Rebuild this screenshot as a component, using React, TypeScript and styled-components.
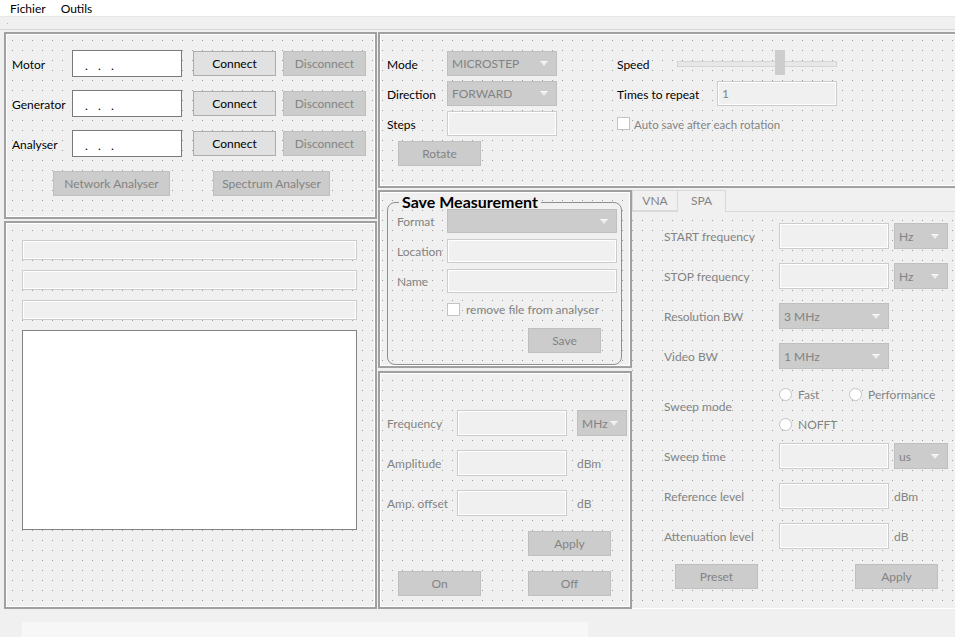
import React from 'react';
import styled, { createGlobalStyle, css } from 'styled-components';

const Global = createGlobalStyle`
  html, body { margin: 0; padding: 0; background: #f0f0f0; overflow: hidden; }
  body { font-family: Lato, "Liberation Sans", sans-serif; font-size: 12px; color: #000; }
  #root { width: 955px; height: 637px; overflow: hidden; }
  * { box-sizing: border-box; }
`;

const MUTED = '#838383';

const dots = css`
  background-color: #f0f0f0;
  background-image: linear-gradient(to bottom, transparent 1px, #f0f0f0 1px),
    linear-gradient(to right, #9e9e9e 1px, transparent 1px);
  background-size: 10px 10px;
  background-position: 2px 0;
  background-attachment: fixed;
`;

const Window = styled.div`
  width: 955px;
  height: 637px;
  display: flex;
  flex-direction: column;
  background: #f0f0f0;
  overflow: hidden;
`;

const MenuBar = styled.div`
  height: 17px;
  flex: none;
  background: #fff;
  border-bottom: 1px solid #e8e8e8;
  display: flex;
  align-items: center;
  gap: 15px;
  padding-left: 10px;
  font-size: 12px;
`;

const ToolBar = styled.div`
  height: 13px;
  flex: none;
  border-bottom: 1px solid #d7d7d7;
  display: flex;
  align-items: center;
  padding-left: 7px;
`;

const Grip = styled.span`
  width: 1px;
  height: 1px;
  background: #b8b8b8;
`;

const Main = styled.div`
  height: 579px;
  flex: none;
  display: flex;
  gap: 1px;
  padding: 2px 0 0 4px;
`;

const StatusBar = styled.div`
  flex: 1;
  padding: 13px 0 0 22px;
`;

const StatusStrip = styled.div`
  width: 566px;
  height: 15px;
  background: #f7f7f7;
`;

const Column = styled.div<{ $w: number; $gap: number }>`
  width: ${p => p.$w}px;
  flex: none;
  display: flex;
  flex-direction: column;
  gap: ${p => p.$gap}px;
`;

const Frame = styled.div<{ $h: number }>`
  ${dots};
  height: ${p => p.$h}px;
  flex: none;
  border: 2px solid #a0a0a0;
  box-shadow: inset 0 0 0 1px #ffffff;
`;

const Label = styled.span<{ $muted?: boolean; $size?: number }>`
  color: ${p => (p.$muted ? MUTED : '#000')};
  font-size: ${p => p.$size ?? 12}px;
  white-space: nowrap;
  padding-top: 1px;
`;

const Button = styled.button<{ $w?: number }>`
  width: ${p => p.$w ?? 83}px;
  height: 25px;
  padding: 0;
  font-family: inherit;
  font-size: 12px;
  color: #000;
  background: #e1e1e1;
  border: 1px solid #adadad;
  &:disabled {
    color: ${MUTED};
    background: #cccccc;
    border-color: #bfbfbf;
  }
`;

const Field = styled.div<{ $w: number; $h?: number; $enabled?: boolean }>`
  width: ${p => p.$w}px;
  height: ${p => p.$h ?? 26}px;
  display: flex;
  align-items: center;
  padding-left: 4px;
  color: ${p => (p.$enabled ? '#000' : MUTED)};
  background: ${p => (p.$enabled ? '#ffffff' : '#f0f0f0')};
  border: 1px solid ${p => (p.$enabled ? '#7a7a7a' : '#cccccc')};
  box-shadow: ${p => (p.$enabled ? 'none' : 'inset 0 0 0 1px #ffffff')};
`;

const IpDot = styled.span`
  width: 13px;
  flex: none;
  padding-top: 3px;
`;

const IpField = styled(Field)`
  padding-left: 12px;
`;

const ComboBox = styled.div<{ $w: number; $h?: number }>`
  width: ${p => p.$w}px;
  height: ${p => p.$h ?? 26}px;
  display: flex;
  align-items: center;
  justify-content: space-between;
  padding: 0 8px 0 4px;
  color: ${MUTED};
  background: #cccccc;
  border: 1px solid #bfbfbf;
`;

const Arrow = () => (
  <svg width="8" height="5" viewBox="0 0 8 5">
    <polygon points="0,0 8,0 4,5" fill="#ededed" />
    <polygon points="0,0 8,0 7,1 1,1" fill="#f8f8f8" />
  </svg>
);

const Combo = ({ w, h, text }: { w: number; h?: number; text?: string }) => (
  <ComboBox $w={w} $h={h}>
    <span>{text}</span>
    <Arrow />
  </ComboBox>
);

const CheckBox = styled.span`
  width: 13px;
  height: 13px;
  flex: none;
  background: #ffffff;
  border: 1px solid #c4c4c4;
`;

const Radio = styled.span`
  width: 13px;
  height: 13px;
  flex: none;
  border-radius: 50%;
  background: #ffffff;
  border: 1px solid #c4c4c4;
`;

const CheckRow = styled.div<{ $gap: number }>`
  display: flex;
  align-items: center;
  gap: ${p => p.$gap}px;
`;

/* ---------- Left top frame ---------- */
const ConnGrid = styled.div`
  display: grid;
  grid-template-columns: 60px 121px 90px 83px;
  grid-auto-rows: 27px;
  row-gap: 13px;
  align-items: center;
  padding: 16px 0 0 6px;
`;

const AnalyserRow = styled.div`
  display: flex;
  gap: 43px;
  padding: 14px 0 0 47px;
`;

/* ---------- Left bottom frame ---------- */
const LogBody = styled.div`
  display: flex;
  flex-direction: column;
  gap: 10px;
  padding: 17px 0 0 16px;
`;

const StatusLine = styled.div`
  width: 335px;
  height: 20px;
  background: #f0f0f0;
  border: 1px solid #cccccc;
  box-shadow: inset 0 0 0 1px #ffffff;
`;

const LogArea = styled.div`
  width: 335px;
  height: 200px;
  background: #ffffff;
  border: 1px solid #828282;
`;

/* ---------- Motor frame ---------- */
const MotorBody = styled.div`
  display: flex;
  padding: 17px 0 0 7px;
`;

const MotorGrid = styled.div`
  display: grid;
  grid-template-columns: 60px 110px;
  grid-template-rows: repeat(4, 25px);
  row-gap: 5px;
  align-items: center;
`;

const RotateCell = styled.div`
  grid-column: 1 / span 2;
  padding-left: 11px;
`;

const MotorRight = styled.div`
  display: flex;
  flex-direction: column;
  gap: 5px;
  margin-left: 60px;
`;

const MotorRow = styled.div<{ $label: number }>`
  height: 25px;
  display: flex;
  align-items: center;
  & > ${Label} {
    width: ${p => p.$label}px;
    flex: none;
  }
`;

const Slider = styled.div`
  position: relative;
  width: 160px;
  height: 25px;
  &::before {
    content: '';
    position: absolute;
    left: 0;
    right: 0;
    top: 10px;
    height: 4px;
    background: #e7e7e7;
    border: 1px solid #d6d6d6;
  }
`;

const SliderHandle = styled.span<{ $left: number }>`
  position: absolute;
  top: -1px;
  left: ${p => p.$left}px;
  width: 10px;
  height: 25px;
  background: #cdcdcd;
`;

/* ---------- Save measurement ---------- */
const SaveGroup = styled.fieldset`
  margin: 4px 8px 0 7px;
  padding: 1px 0 0 9px;
  min-width: 0;
  height: 169px;
  border: 1px solid #8f8f8f;
  border-radius: 8px;
`;

const Legend = styled.legend`
  margin-left: 2px;
  padding: 0 3px;
  font-size: 16px;
  font-weight: 700;
  line-height: 12px;
  color: #000;
`;

const SaveGrid = styled.div`
  display: grid;
  grid-template-columns: 50px 170px;
  grid-template-rows: 24px 24px 24px 20px 28px;
  row-gap: 6px;
  align-items: center;
`;

const SaveCell = styled.div`
  grid-column: 2;
  align-self: end;
  padding-left: 81px;
`;

/* ---------- Generator frame ---------- */
const GenGrid = styled.div`
  display: grid;
  grid-template-columns: 70px 120px 50px;
  grid-auto-rows: 26px;
  row-gap: 14px;
  align-items: center;
  padding: 37px 0 0 7px;
`;

const GenButtons = styled.div`
  display: grid;
  grid-template-columns: 83px 83px;
  grid-template-rows: 25px 25px;
  column-gap: 47px;
  row-gap: 15px;
  padding: 15px 0 0 18px;
`;

const SecondCol = styled.div`
  grid-column: 2;
`;

/* ---------- Tabs ---------- */
const RightArea = styled.div`
  width: 582px;
  flex: none;
  display: flex;
  flex-direction: column;
  gap: 2px;
`;

const LowerRow = styled.div`
  display: flex;
  flex: 1;
  min-height: 0;
`;

const TabWidget = styled.div`
  flex: 1;
  display: flex;
  flex-direction: column;
`;

const TabBar = styled.div`
  height: 21px;
  flex: none;
  display: flex;
  align-items: flex-end;
`;

const Tab = styled.div<{ $w: number; $active?: boolean }>`
  width: ${p => p.$w}px;
  height: ${p => (p.$active ? 22 : 21)}px;
  margin-bottom: ${p => (p.$active ? -1 : 0)}px;
  position: relative;
  z-index: ${p => (p.$active ? 1 : 0)};
  display: flex;
  align-items: center;
  justify-content: center;
  padding-bottom: ${p => (p.$active ? 2 : 1)}px;
  color: ${MUTED};
  background: #f0f0f0;
  border: 1px solid #d9d9d9;
  border-bottom: ${p => (p.$active ? 'none' : '1px solid #d9d9d9')};
  border-left: ${p => (p.$active ? 'none' : '1px solid #d9d9d9')};
`;

const Pane = styled.div`
  ${dots};
  flex: 1;
  border-top: 1px solid #d9d9d9;
  border-bottom: 1px solid #ffffff;
  padding: 11px 0 0 32px;
`;

const SpaGrid = styled.div`
  display: grid;
  grid-template-columns: 115px 115px 54px;
  grid-template-rows: 26px 26px 26px 26px 46px 26px 26px 26px;
  row-gap: 14px;
  align-items: center;
`;

const RadioGroup = styled.div`
  grid-column: 2 / span 2;
  align-self: start;
  display: grid;
  grid-template-columns: 70px auto;
  grid-auto-rows: 22px;
  row-gap: 8px;
  align-items: center;
`;

const SpaButtons = styled.div`
  display: flex;
  gap: 97px;
  padding: 15px 0 0 11px;
`;

export default function App() {
  return (
    <Window>
      <Global />
      <MenuBar>
        <span>Fichier</span>
        <span>Outils</span>
      </MenuBar>
      <ToolBar>
        <Grip />
      </ToolBar>
      <Main>
        <Column $w={373} $gap={2}>
          <Frame $h={187}>
            <ConnGrid>
              {['Motor', 'Generator', 'Analyser'].map(name => (
                <React.Fragment key={name}>
                  <Label>{name}</Label>
                  <IpField $w={110} $h={27} $enabled>
                    <IpDot>.</IpDot>
                    <IpDot>.</IpDot>
                    <IpDot>.</IpDot>
                  </IpField>
                  <Button>Connect</Button>
                  <Button disabled>Disconnect</Button>
                </React.Fragment>
              ))}
            </ConnGrid>
            <AnalyserRow>
              <Button disabled $w={117}>Network Analyser</Button>
              <Button disabled $w={117}>Spectrum Analyser</Button>
            </AnalyserRow>
          </Frame>
          <Frame $h={388}>
            <LogBody>
              <StatusLine />
              <StatusLine />
              <StatusLine />
              <LogArea />
            </LogBody>
          </Frame>
        </Column>

        <RightArea>
          <Frame $h={156}>
            <MotorBody>
              <MotorGrid>
                <Label>Mode</Label>
                <Combo w={110} h={25} text="MICROSTEP" />
                <Label>Direction</Label>
                <Combo w={110} h={25} text="FORWARD" />
                <Label>Steps</Label>
                <Field $w={110} $h={25} />
                <RotateCell>
                  <Button disabled>Rotate</Button>
                </RotateCell>
              </MotorGrid>
              <MotorRight>
                <MotorRow $label={60}>
                  <Label>Speed</Label>
                  <Slider>
                    <SliderHandle $left={98} />
                  </Slider>
                </MotorRow>
                <MotorRow $label={100}>
                  <Label>Times to repeat</Label>
                  <Field $w={120} $h={25}>1</Field>
                </MotorRow>
                <MotorRow $label={0}>
                  <CheckRow $gap={4}>
                    <CheckBox />
                    <Label $muted $size={11.5}>Auto save after each rotation</Label>
                  </CheckRow>
                </MotorRow>
              </MotorRight>
            </MotorBody>
          </Frame>

          <LowerRow>
            <Column $w={254} $gap={3}>
              <Frame $h={178}>
                <SaveGroup>
                  <Legend>Save Measurement</Legend>
                  <SaveGrid>
                    <Label $muted>Format</Label>
                    <Combo w={170} h={24} />
                    <Label $muted>Location</Label>
                    <Field $w={170} $h={24} />
                    <Label $muted>Name</Label>
                    <Field $w={170} $h={24} />
                    <SecondCol>
                      <CheckRow $gap={6}>
                        <CheckBox />
                        <Label $muted>remove file from analyser</Label>
                      </CheckRow>
                    </SecondCol>
                    <SaveCell>
                      <Button disabled $w={73}>Save</Button>
                    </SaveCell>
                  </SaveGrid>
                </SaveGroup>
              </Frame>
              <Frame $h={238}>
                <GenGrid>
                  <Label $muted>Frequency</Label>
                  <Field $w={110} />
                  <Combo w={50} text="MHz" />
                  <Label $muted>Amplitude</Label>
                  <Field $w={110} />
                  <Label $muted>dBm</Label>
                  <Label $muted>Amp. offset</Label>
                  <Field $w={110} />
                  <Label $muted>dB</Label>
                </GenGrid>
                <GenButtons>
                  <SecondCol>
                    <Button disabled>Apply</Button>
                  </SecondCol>
                  <Button disabled>On</Button>
                  <Button disabled>Off</Button>
                </GenButtons>
              </Frame>
            </Column>

            <TabWidget>
              <TabBar>
                <Tab $w={46}>VNA</Tab>
                <Tab $w={48} $active>SPA</Tab>
              </TabBar>
              <Pane>
                <SpaGrid>
                  <Label $muted>START frequency</Label>
                  <Field $w={110} />
                  <Combo w={54} text="Hz" />
                  <Label $muted>STOP frequency</Label>
                  <Field $w={110} />
                  <Combo w={54} text="Hz" />
                  <Label $muted>Resolution BW</Label>
                  <Combo w={110} text="3 MHz" />
                  <span />
                  <Label $muted>Video BW</Label>
                  <Combo w={110} text="1 MHz" />
                  <span />
                  <Label $muted>Sweep mode</Label>
                  <RadioGroup>
                    <CheckRow $gap={6}>
                      <Radio />
                      <Label $muted>Fast</Label>
                    </CheckRow>
                    <CheckRow $gap={6}>
                      <Radio />
                      <Label $muted>Performance</Label>
                    </CheckRow>
                    <CheckRow $gap={6}>
                      <Radio />
                      <Label $muted>NOFFT</Label>
                    </CheckRow>
                  </RadioGroup>
                  <Label $muted>Sweep time</Label>
                  <Field $w={110} />
                  <Combo w={54} text="us" />
                  <Label $muted>Reference level</Label>
                  <Field $w={110} />
                  <Label $muted>dBm</Label>
                  <Label $muted>Attenuation level</Label>
                  <Field $w={110} />
                  <Label $muted>dB</Label>
                </SpaGrid>
                <SpaButtons>
                  <Button disabled>Preset</Button>
                  <Button disabled>Apply</Button>
                </SpaButtons>
              </Pane>
            </TabWidget>
          </LowerRow>
        </RightArea>
      </Main>
      <StatusBar>
        <StatusStrip />
      </StatusBar>
    </Window>
  );
}
